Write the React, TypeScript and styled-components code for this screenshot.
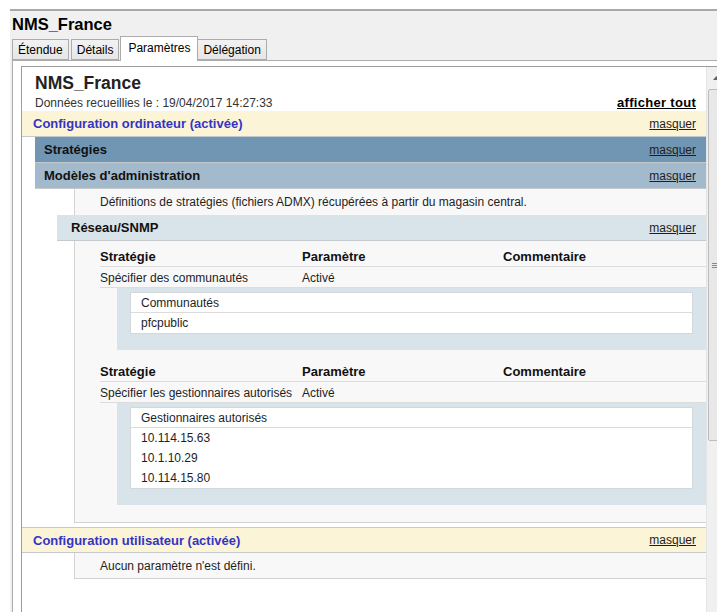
import React from 'react';
import styled, { createGlobalStyle } from 'styled-components';

const GlobalStyle = createGlobalStyle`
  html, body {
    margin: 0;
    padding: 0;
    background: #fff;
    overflow: hidden;
  }
  body {
    font-family: "Liberation Sans", Arial, sans-serif;
    font-size: 12px;
    color: #1e1e1e;
  }
`;

const TABS = ['Étendue', 'Détails', 'Paramètres', 'Délégation'];

const POLICIES = [
  {
    name: 'Spécifier des communautés',
    state: 'Activé',
    listTitle: 'Communautés',
    values: ['pfcpublic'],
  },
  {
    name: 'Spécifier les gestionnaires autorisés',
    state: 'Activé',
    listTitle: 'Gestionnaires autorisés',
    values: ['10.114.15.63', '10.1.10.29', '10.114.15.80'],
  },
];

const App = () => {
  return (
    <>
      <GlobalStyle />
      <Window>
        <WindowTitle>NMS_France</WindowTitle>
        <TabStrip>
          {TABS.map((tab) => (
            <Tab key={tab} $active={tab === 'Paramètres'}>
              {tab}
            </Tab>
          ))}
        </TabStrip>
        <TabPanel>
          <Frame>
            <Report>
              <ReportHead>
                <ReportTitle>NMS_France</ReportTitle>
                <MetaRow>
                  <span>Données recueillies le : 19/04/2017 14:27:33</span>
                  <ShowAll>afficher tout</ShowAll>
                </MetaRow>
              </ReportHead>

              <Band $bg="#fcf4d6" $color="#3434c4" $indent={0} $pad={11}>
                <span>Configuration ordinateur (activée)</span>
                <Toggle>masquer</Toggle>
              </Band>
              <Band $bg="#7196b4" $indent={13} $pad={9}>
                <span>Stratégies</span>
                <Toggle>masquer</Toggle>
              </Band>
              <Band $bg="#a3b9cc" $indent={13} $pad={9}>
                <span>Modèles d'administration</span>
                <Toggle>masquer</Toggle>
              </Band>
              <NoteRow>
                Définitions de stratégies (fichiers ADMX) récupérées à partir du magasin central.
              </NoteRow>
              <Band $bg="#d9e3ea" $indent={35} $pad={14}>
                <span>Réseau/SNMP</span>
                <Toggle>masquer</Toggle>
              </Band>

              <PolicyBlock>
                {POLICIES.map((p) => (
                  <PolicyGroup key={p.name}>
                    <PolicyHeader>
                      <span>Stratégie</span>
                      <span>Paramètre</span>
                      <span>Commentaire</span>
                    </PolicyHeader>
                    <PolicyRow>
                      <span>{p.name}</span>
                      <span>{p.state}</span>
                      <span />
                    </PolicyRow>
                    <ValueBox>
                      <ValueTable>
                        <ValueTitle>{p.listTitle}</ValueTitle>
                        {p.values.map((v) => (
                          <ValueCell key={v}>{v}</ValueCell>
                        ))}
                      </ValueTable>
                    </ValueBox>
                  </PolicyGroup>
                ))}
              </PolicyBlock>

              <Spacer />
              <Band $bg="#fcf4d6" $color="#3434c4" $indent={0} $pad={11} $topBorder>
                <span>Configuration utilisateur (activée)</span>
                <Toggle>masquer</Toggle>
              </Band>
              <NoteRow $closed>Aucun paramètre n'est défini.</NoteRow>
            </Report>

            <ScrollBar>
              <ScrollArrow>
                <svg width="7" height="4" viewBox="0 0 7 4">
                  <path d="M0 4 L3.5 0 L7 4 Z" fill="#606060" />
                </svg>
              </ScrollArrow>
              <ScrollThumb>
                <Grip />
              </ScrollThumb>
            </ScrollBar>
          </Frame>
        </TabPanel>
      </Window>
    </>
  );
};

export default App;

const Window = styled.div`
  margin: 9px 0 0 10px;
  height: 603px;
  box-sizing: border-box;
  border-top: 2px solid #a8a8a8;
  background: #f0f0f0;
  display: flex;
  flex-direction: column;
`;

const WindowTitle = styled.h1`
  margin: 0;
  height: 25px;
  padding: 3px 0 0 2px;
  box-sizing: border-box;
  font-size: 16.5px;
  line-height: 20px;
  font-weight: bold;
  color: #000;
`;

const TabStrip = styled.div`
  display: flex;
  align-items: flex-end;
  height: 24px;
  padding-left: 2px;
`;

const Tab = styled.div<{ $active?: boolean }>`
  position: relative;
  box-sizing: border-box;
  height: ${(p) => (p.$active ? '25px' : '21px')};
  margin: ${(p) => (p.$active ? '0 -1px -1px -1px' : '0 2px 0 0')};
  padding: ${(p) => (p.$active ? '0 7px 3px' : '1px 5px 0')};
  border: 1px solid #acacac;
  border-bottom: ${(p) => (p.$active ? 'none' : '1px solid #acacac')};
  background: ${(p) => (p.$active ? '#fff' : 'linear-gradient(#f2f2f2, #e6e6e6)')};
  z-index: ${(p) => (p.$active ? 1 : 0)};
  display: flex;
  align-items: center;
  font-size: 12px;
  color: #000;
`;

const TabPanel = styled.div`
  flex: 1;
  margin-left: 2px;
  padding: 5px 0 0 8px;
  border-top: 1px solid #acacac;
  border-left: 1px solid #acacac;
  background: #fff;
  min-height: 0;
`;

const Frame = styled.div`
  display: flex;
  height: 100%;
  width: 702px;
  border-top: 1px solid #9c9c9c;
  border-left: 1px solid #9c9c9c;
`;

const Report = styled.div`
  width: 685px;
  display: flex;
  flex-direction: column;
`;

const ReportHead = styled.div`
  padding: 6px 10px 0 13px;
  height: 44px;
  box-sizing: border-box;
`;

const ReportTitle = styled.h2`
  margin: 0;
  font-size: 17.5px;
  line-height: 20px;
  font-weight: bold;
  color: #222;
`;

const MetaRow = styled.div`
  margin-top: 2px;
  display: flex;
  justify-content: space-between;
  line-height: 16px;
  color: #333;
`;

const ShowAll = styled.a`
  font-size: 13px;
  font-weight: bold;
  color: #000;
  text-decoration: underline;
  letter-spacing: 0.3px;
`;

const Band = styled.div<{ $bg: string; $color?: string; $indent: number; $pad: number; $topBorder?: boolean }>`
  display: flex;
  justify-content: space-between;
  align-items: center;
  height: 26px;
  box-sizing: border-box;
  margin-left: ${(p) => p.$indent}px;
  padding: 0 10px 0 ${(p) => p.$pad}px;
  background: ${(p) => p.$bg};
  border-top: ${(p) => (p.$topBorder ? '1px solid #c9c9c9' : 'none')};
  border-bottom: 1px solid #c4c9cd;
  font-size: 13px;
  font-weight: bold;
  color: ${(p) => p.$color ?? '#111'};
`;

const Toggle = styled.a`
  font-size: 12px;
  font-weight: normal;
  color: #1e1e1e;
  text-decoration: underline;
`;

const NoteRow = styled.div<{ $closed?: boolean }>`
  height: 26px;
  box-sizing: border-box;
  margin-left: 52px;
  padding-left: 25px;
  display: flex;
  align-items: center;
  background: #f8f8f8;
  border-left: 1px solid #d2d2d2;
  border-bottom: ${(p) => (p.$closed ? '1px solid #d2d2d2' : 'none')};
`;

const PolicyBlock = styled.div`
  margin-left: 52px;
  padding: 6px 0 17px 25px;
  background: #f8f8f8;
  border-left: 1px solid #d2d2d2;
  border-bottom: 1px solid #d2d2d2;
`;

const PolicyGroup = styled.div`
  & + & {
    margin-top: 12px;
  }
`;

const PolicyHeader = styled.div`
  display: grid;
  grid-template-columns: 202px 201px 1fr;
  height: 20px;
  box-sizing: border-box;
  align-items: center;
  border-bottom: 1px solid #dcdcdc;
  font-size: 13px;
  font-weight: bold;
  color: #111;
`;

const PolicyRow = styled(PolicyHeader)`
  height: 21px;
  padding-top: 1px;
  font-size: 12px;
  font-weight: normal;
  color: #1e1e1e;
`;

const ValueBox = styled.div`
  margin-left: 17px;
  padding: 4px 13px 16px;
  background: #d9e3ea;
`;

const ValueTable = styled.div`
  background: #fff;
  border: 1px solid #d4d8dc;
`;

const ValueCell = styled.div`
  height: 20px;
  box-sizing: border-box;
  padding-left: 10px;
  display: flex;
  align-items: center;
`;

const ValueTitle = styled(ValueCell)`
  border-bottom: 1px solid #dcdcdc;
`;

const Spacer = styled.div`
  height: 4px;
`;

const ScrollBar = styled.div`
  width: 17px;
  display: flex;
  flex-direction: column;
  background: #f0f0f0;
  border-left: 1px solid #e4e4e4;
`;

const ScrollArrow = styled.div`
  height: 21px;
  display: flex;
  align-items: center;
  justify-content: center;
  padding-left: 1px;
`;

const ScrollThumb = styled.div`
  margin: 1px 1px 0 1px;
  height: 352px;
  box-sizing: border-box;
  border: 1px solid #bcbcbc;
  border-radius: 2px;
  background: #e8e8e8;
  display: flex;
  align-items: center;
  justify-content: center;
`;

const Grip = styled.div`
  width: 7px;
  height: 5px;
  background: repeating-linear-gradient(#8a8a8a 0 1px, transparent 1px 2px);
`;
